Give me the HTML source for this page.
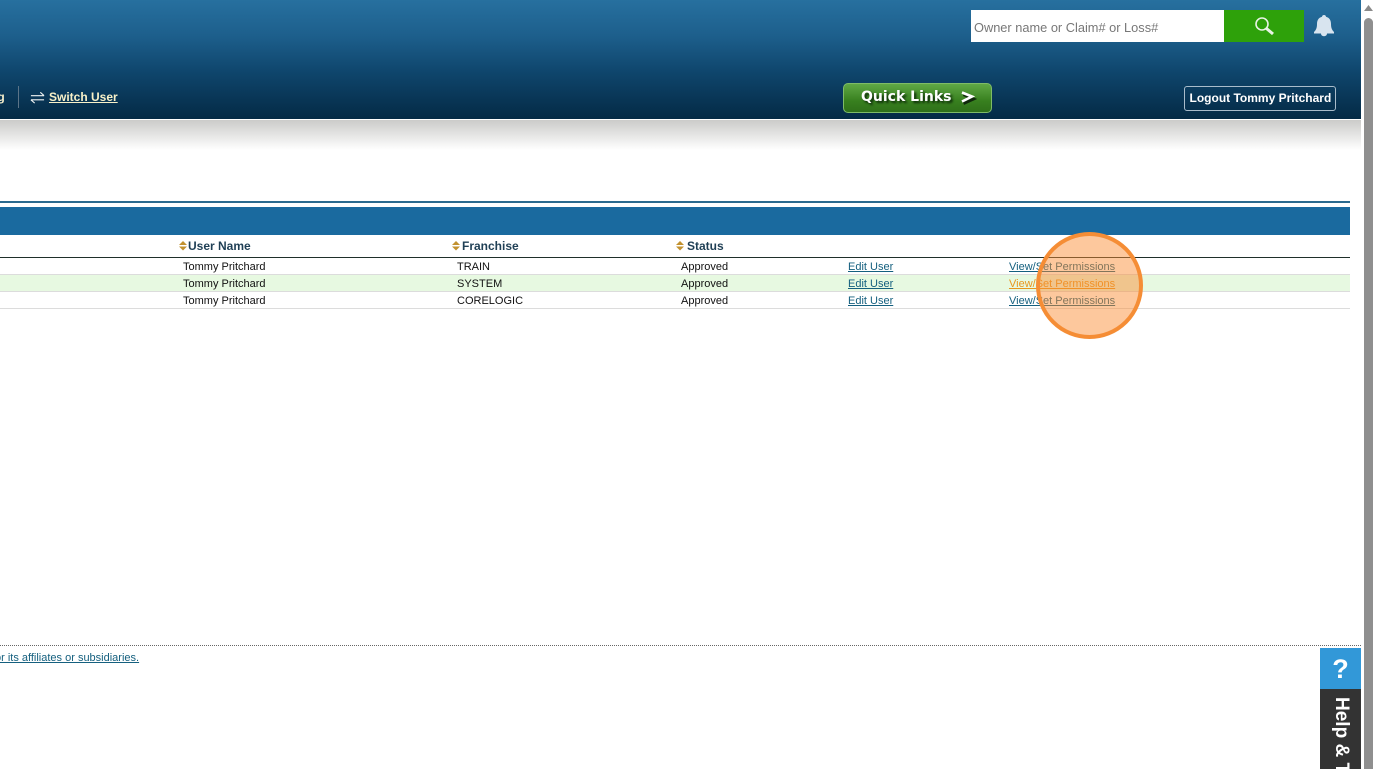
<!DOCTYPE html>
<html><head><meta charset="utf-8"><title>Users</title>
<style>
html,body{margin:0;padding:0;background:#fff;width:1376px;height:769px;overflow:hidden;}
body{position:relative;font-family:"Liberation Sans",Arial,sans-serif;}
.a{position:absolute;white-space:nowrap;}
.t{font-size:11px;line-height:13px;color:#111;}
.h{font-size:12px;line-height:14px;font-weight:bold;color:#1f3f55;top:239px;}
.l{font-size:11px;line-height:13px;color:#15607f;text-decoration:underline;}
</style></head><body>
<div class="a" style="left:0;top:0;width:1361px;height:119px;background:linear-gradient(#27709f 0,#1d5f8c 30%,#0f466d 60%,#042a45 100%);"></div>
<div class="a" style="left:0;top:119px;width:1361px;height:1px;background:#fff;"></div>
<div class="a" style="left:0;top:120px;width:1361px;height:30px;background:linear-gradient(#cbcbc9,#fff);"></div>

<div class="a" style="left:971px;top:10px;width:253px;height:32px;background:#fff;"></div>
<div class="a" style="left:974px;top:20px;font-size:12.800px;line-height:16px;color:#777;">Owner name or Claim# or Loss#</div>
<div class="a" style="left:1224px;top:10px;width:80px;height:32px;background:#2ea10a;"></div>
<svg class="a" style="left:1254px;top:16px;" width="22" height="20" viewBox="0 0 22 20"><circle cx="8" cy="8" r="6" fill="none" stroke="#e8f3e4" stroke-width="1.600"/><path d="M12.500 12.500L19 18" stroke="#e8f3e4" stroke-width="3"/></svg>
<svg class="a" style="left:1313px;top:14px;" width="22" height="23" viewBox="0 0 22 23"><path d="M11 1c1.200 0 2 .8 2 1.800C16.500 3.800 18 6.500 18 10c0 4 1 6 3 8v1.500H1v-1.500c2-2 3-4 3-8 0-3.500 1.500-6.200 5-7.200C9 1.800 9.800 1 11 1zM8 19.500h6c0 1.700-1.300 2.700-3 2.700s-3-1-3-2.700z" fill="#d8e4ef"/></svg>

<div class="a" style="left:-10px;top:90px;font-size:12px;line-height:14px;font-weight:bold;color:#f5eecb;">ng</div>
<div class="a" style="left:18px;top:86px;width:1px;height:22px;background:#5b7488;"></div>
<svg class="a" style="left:30px;top:91px;" width="15" height="13" viewBox="0 0 16 13"><path d="M1 4.500H15M11 1L15 4.500M1 9H15M5 12.500L1 9" fill="none" stroke="#f0f4f4" stroke-width="1.200"/></svg>
<div class="a" style="left:49px;top:90px;font-size:12px;line-height:14px;font-weight:bold;color:#f8f1c8;text-decoration:underline;">Switch User</div>

<div class="a" style="left:843px;top:83px;width:147px;height:28px;border:1px solid #7fbb67;border-radius:5px;background:linear-gradient(#60a845,#38801f 60%,#2f7019);"></div>
<div class="a" style="left:861px;top:88px;font-family:'DejaVu Sans',sans-serif;font-size:14px;line-height:18px;font-weight:bold;color:#fff;text-shadow:2px 2px 2px #0c2a08;">Quick Links</div>
<svg class="a" style="left:960px;top:90px;" width="18" height="16" viewBox="0 0 18 16"><path d="M2 3L12 7.500L2 12" fill="none" stroke="#10280c" stroke-width="3" transform="translate(1.500 1.500)"/><path d="M2 2.500L12 6.500L2 11.500" fill="none" stroke="#fff" stroke-width="2.600"/></svg>

<div class="a" style="left:1184px;top:86px;width:150px;height:23px;border:1px solid #a9bccb;border-radius:3px;"></div>
<div class="a" style="left:1189.500px;top:91px;font-size:12px;line-height:14px;font-weight:bold;color:#fff;">Logout Tommy Pritchard</div>

<div class="a" style="left:0;top:201px;width:1350px;height:2px;background:#2b6a8f;"></div>
<div class="a" style="left:0;top:207px;width:1350px;height:28px;background:#1a6a9f;"></div>
<div class="a" style="left:0;top:257px;width:1350px;height:1px;background:#1f2f2a;"></div>
<div class="a" style="left:0;top:275px;width:1350px;height:16px;background:#e7f9e1;"></div>
<div class="a" style="left:0;top:274px;width:1350px;height:1px;background:#dcdcdc;"></div>
<div class="a" style="left:0;top:291px;width:1350px;height:1px;background:#dcdcdc;"></div>
<div class="a" style="left:0;top:308px;width:1350px;height:1px;background:#dcdcdc;"></div>

<svg class="a" style="left:179px;top:241px;" width="8" height="10" viewBox="0 0 8 10"><path d="M4 0L8 4H0zM0 5.500H8L4 9.500z" fill="#c2912f"/></svg>
<div class="a h" style="left:188px;">User Name</div>
<svg class="a" style="left:452px;top:241px;" width="8" height="10" viewBox="0 0 8 10"><path d="M4 0L8 4H0zM0 5.500H8L4 9.500z" fill="#c2912f"/></svg>
<div class="a h" style="left:462px;">Franchise</div>
<svg class="a" style="left:676px;top:241px;" width="8" height="10" viewBox="0 0 8 10"><path d="M4 0L8 4H0zM0 5.500H8L4 9.500z" fill="#c2912f"/></svg>
<div class="a h" style="left:687px;">Status</div>

<div class="a t" style="left:183px;top:261px;">Tommy Pritchard</div>
<div class="a t" style="left:457px;top:261px;">TRAIN</div>
<div class="a t" style="left:681px;top:261px;">Approved</div>
<div class="a l" style="left:848px;top:261px;">Edit User</div>
<div class="a l" style="left:1009px;top:261px;">View/Set Permissions</div>

<div class="a t" style="left:183px;top:278px;">Tommy Pritchard</div>
<div class="a t" style="left:457px;top:278px;">SYSTEM</div>
<div class="a t" style="left:681px;top:278px;">Approved</div>
<div class="a l" style="left:848px;top:278px;">Edit User</div>
<div class="a l" style="left:1009px;top:278px;color:#e8961e;">View/Set Permissions</div>

<div class="a t" style="left:183px;top:295px;">Tommy Pritchard</div>
<div class="a t" style="left:457px;top:295px;">CORELOGIC</div>
<div class="a t" style="left:681px;top:295px;">Approved</div>
<div class="a l" style="left:848px;top:295px;">Edit User</div>
<div class="a l" style="left:1009px;top:295px;">View/Set Permissions</div>

<div class="a" style="left:1036px;top:232px;width:107px;height:107px;box-sizing:border-box;border:4px solid #f58d35;border-radius:50%;background:rgba(250,140,50,.48);"></div>

<div class="a" style="left:0;top:645px;width:1361px;height:0;border-top:1px dotted #666;"></div>
<div class="a" style="left:-5px;top:652px;font-size:11px;line-height:13px;color:#15607f;text-decoration:underline;">or its affiliates or subsidiaries.</div>

<div class="a" style="left:1320px;top:648px;width:41px;height:41px;background:#3298d8;"></div>
<div class="a" style="left:1320px;top:648px;width:41px;height:41px;text-align:center;font-size:27px;line-height:43px;font-weight:bold;color:#fff;">?</div>
<div class="a" style="left:1320px;top:689px;width:41px;height:80px;background:#333;overflow:hidden;">
  <div class="a" style="left:10px;top:8px;writing-mode:vertical-rl;font-size:19px;line-height:22px;font-weight:bold;color:#fff;">Help &amp; Tips</div>
</div>

<div class="a" style="left:1361px;top:0;width:15px;height:769px;background:#fff;"></div>
<svg class="a" style="left:1363px;top:4px;" width="11" height="9" viewBox="0 0 11 9"><path d="M5.500 1L10 7H1z" fill="#8a8a8a"/></svg>
<div class="a" style="left:1364px;top:18px;width:9px;height:751px;background:#8f8f8f;border-radius:5px 5px 0 0;"></div>
</body></html>
